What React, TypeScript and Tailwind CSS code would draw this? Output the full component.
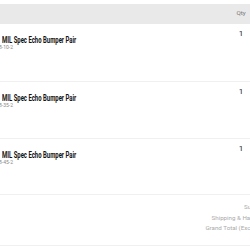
export default function App() {
  const items = [
    { name: "MIL Spec Echo Bumper Pair", sku: "8-10-2", qty: 1 },
    { name: "MIL Spec Echo Bumper Pair", sku: "8-35-2", qty: 1 },
    { name: "MIL Spec Echo Bumper Pair", sku: "8-45-2", qty: 1 },
  ]

  return (
    <div className="w-[250px] h-[250px] overflow-hidden bg-white font-['Roboto',sans-serif]">
      <div className="w-[290px] pt-[4px]">
        {/* Table head */}
        <div className="flex h-[20px] items-center bg-[#e9e9e9]">
          <div className="flex-1" />
          <div className="w-[48px] text-center text-[6.2px] text-[#777]">Qty</div>
          <div className="w-[25px]" />
        </div>

        {/* Items */}
        {items.map((item, i) => (
          <div
            key={i}
            className={`flex ${i === 2 ? "h-[56px]" : "h-[57px]"} ${i > 0 ? "border-t border-[#f0f0f0]" : ""}`}
          >
            <div className="flex-1 pl-[2px] pt-[10.5px]">
              <div className="origin-left scale-x-[0.7] whitespace-nowrap text-[8.5px] font-bold leading-[10px] text-[#111]">
                {item.name}
              </div>
              <div className="-ml-[3px] -mt-[0.5px] text-[5px] leading-[7px] text-[#888]">{item.sku}</div>
            </div>
            <div className="w-[48px] pt-[5px] text-center text-[8px] leading-[10px] text-[#222]">{item.qty}</div>
            <div className="w-[25px]" />
          </div>
        ))}

        {/* Totals */}
        <div className="flex h-[52px] flex-col items-end border-y border-[#f0f0f0] pr-[23px] pt-[7px] text-[6.2px] leading-[10.5px] text-[#aaa]">
          <div>Subtotal</div>
          <div>Shipping &amp; Handling</div>
          <div>Grand Total (Excl. Tax)</div>
        </div>
      </div>
    </div>
  )
}
